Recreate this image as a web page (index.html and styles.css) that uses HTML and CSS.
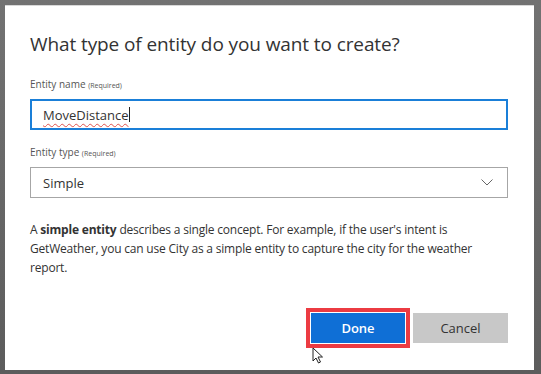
FILE: index.html
```html
<!DOCTYPE html>
<html lang="en">
<head>
    <meta charset="UTF-8">
    <meta name="viewport" content="width=device-width, initial-scale=1.0">
    <title>Create entity</title>
    <link rel="stylesheet" href="styles.css">
</head>
<body>
    <div class="dialog">
        <h1>What type of entity do you want to create?</h1>
        <div class="field">
            <label>Entity name <span class="req">(Required)</span></label>
            <div class="box active"><span class="typed">MoveDistance</span><span class="caret"></span></div>
        </div>
        <div class="field">
            <label>Entity type <span class="req">(Required)</span></label>
            <div class="box select">
                <span>Simple</span>
                <svg class="chev" width="12" height="7" viewBox="0 0 12 7"><path d="M0.5 0.5 L6 6 L11.5 0.5" fill="none" stroke="#666" stroke-width="1"/></svg>
            </div>
        </div>
        <p class="desc">A <b>simple entity</b> describes a single concept. For example, if the user's intent is GetWeather, you can use City as a simple entity to capture the city for the weather report.</p>
        <div class="actions">
            <div class="mark">
                <button class="btn primary">Done</button>
                <svg class="pointer" width="12" height="17" viewBox="0 0 12 17"><path d="M1 1 L1 14 L4 11 L6.5 16 L8.5 15 L6 10 L10.5 10 Z" fill="#fff" stroke="#222" stroke-width="1" stroke-linejoin="round"/></svg>
            </div>
            <button class="btn secondary">Cancel</button>
        </div>
    </div>
</body>
</html>
```

FILE: styles.css
```css
html, body {
    margin: 0;
    height: 100%;
}
body {
    box-sizing: border-box;
    padding: 5px 7px 4px 5px;
    background: linear-gradient(180deg, #727272, #5c5c5c);
    font-family: 'Open Sans', 'Noto Sans', sans-serif;
    color: #333;
}
.dialog {
    box-sizing: border-box;
    height: 100%;
    background: #fff;
    border-top: 1px solid #d8d8d8;
    padding: 25px 26px 0 25px;
}
h1 {
    margin: 0 0 20px;
    font-size: 19px;
    font-weight: 400;
    color: #333;
    letter-spacing: -0.1px;
}
.field {
    margin-bottom: 15px;
}
label {
    display: block;
    font-size: 10px;
    color: #555;
    margin-bottom: 8px;
}
.req {
    font-size: 7px;
}
.box {
    box-sizing: border-box;
    height: 31px;
    border: 1px solid #a6a6a6;
    display: flex;
    align-items: center;
    padding: 0 12px;
    font-size: 13px;
    color: #333;
}
.box.active {
    border: 2px solid #1a7fd8;
    padding: 0 11px;
}
.typed {
    text-decoration: underline wavy #e0524c;
    text-decoration-thickness: 1px;
    text-underline-offset: 3px;
}
.caret {
    display: inline-block;
    width: 1px;
    height: 15px;
    background: #222;
}
.select {
    justify-content: space-between;
    padding-right: 14px;
}
.desc {
    margin: 22px 0 0;
    font-size: 12px;
    letter-spacing: -0.2px;
    line-height: 19px;
    color: #333;
}
.desc b {
    font-weight: 700;
}
.actions {
    display: flex;
    justify-content: flex-end;
    align-items: center;
    gap: 3px;
    margin-top: 31px;
}
.mark {
    position: relative;
    border: 4px solid #ec3b42;
    padding: 1px;
}
.btn {
    box-sizing: border-box;
    width: 94px;
    height: 30px;
    border: none;
    font-family: inherit;
    font-size: 13px;
    display: block;
}
.primary {
    background: #0f6fd6;
    color: #fff;
    font-weight: 600;
}
.secondary {
    width: 95px;
    background: #c8c8c8;
    color: #333;
}
.pointer {
    position: absolute;
    left: 2px;
    top: 35px;
}
```
